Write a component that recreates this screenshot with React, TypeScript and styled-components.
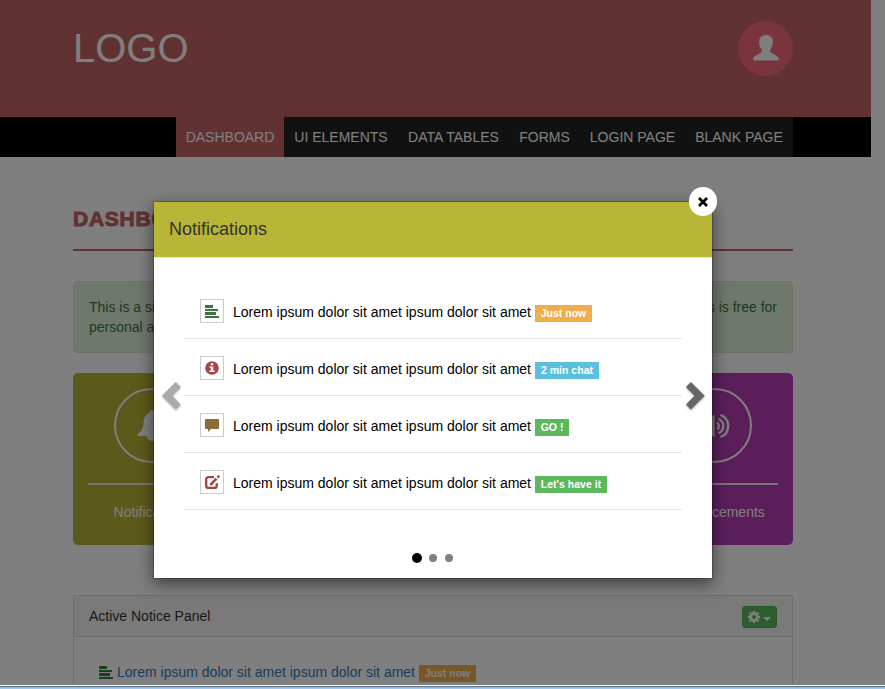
import React from 'react';
import styled, { createGlobalStyle } from 'styled-components';

const Global = createGlobalStyle`
  *, *::before, *::after { box-sizing: border-box; }
  body { margin: 0; background: #fff; font: 14px/20px "Liberation Sans", Arial, sans-serif; color: #333; }
  svg { display: block; }
`;

const Screen = styled.div`
  position: relative;
  width: 885px;
  height: 689px;
  overflow: hidden;
  display: flex;
  flex-direction: column;
`;
const Page = styled.div`
  width: 871px;
  height: 685px;
  overflow: hidden;
`;
const WindowEdge = styled.div`
  position: relative;
  z-index: 3;
  height: 4px;
  border-top: 1px solid #fff;
  background: linear-gradient(#60758c 0 1px, #8ab6e6 1px 2px, #9fc8f4 2px 3px);
`;
const Header = styled.header`
  height: 117px;
  background: #c46464;
  padding: 21px 78px 0 73px;
  display: flex;
  justify-content: space-between;
`;
const Logo = styled.div`
  color: #fff;
  font-size: 40px;
  line-height: 54px;
`;
const Avatar = styled.div`
  width: 55px;
  height: 55px;
  border-radius: 50%;
  background: #f5687c;
  display: flex;
  justify-content: center;
  padding-top: 14px;
`;
const NavBar = styled.nav`
  height: 40px;
  background: #000;
  padding-right: 78px;
  display: flex;
  justify-content: flex-end;
`;
const NavItem = styled.a<{ $active?: boolean; $w: number }>`
  width: ${p => p.$w}px;
  line-height: 40px;
  text-align: center;
  white-space: nowrap;
  color: #fff;
  background: ${p => (p.$active ? '#c46464' : '#222')};
`;
const Content = styled.main`
  width: 720px;
  margin-left: 73px;
`;
const Heading = styled.h1`
  margin: 0 0 30px;
  height: 94px;
  padding-top: 50px;
  border-bottom: 2px solid #c46464;
  color: #c46464;
  font-size: 21px;
  font-weight: 900;
  line-height: 24px;
  letter-spacing: 0.75px;
  -webkit-text-stroke: 1px #c46464;
`;
const Alert = styled.div`
  height: 72px;
  margin-bottom: 20px;
  padding: 15px 15px;
  color: #3c763d;
  background: #dff0d8;
  border: 1px solid #d6e9c6;
  border-radius: 4px;
`;
const AlertLine = styled.div`
  display: flex;
  justify-content: space-between;
`;
const Tiles = styled.div`
  display: flex;
  justify-content: space-between;
  margin-bottom: 50px;
`;
const Tile = styled.div<{ $bg: string }>`
  width: 157.5px;
  height: 172px;
  border-radius: 5px;
  padding: 15px;
  background: ${p => p.$bg};
  color: #fff;
  display: flex;
  flex-direction: column;
  align-items: center;
`;
const TileCircle = styled.div`
  width: 75px;
  height: 75px;
  border: 2px solid #fff;
  border-radius: 50%;
  display: grid;
  place-items: center;
`;
const TileLine = styled.div`
  width: 100%;
  height: 2px;
  margin: 20px 0 17px;
  background: #eee;
`;
const Panel = styled.section`
  height: 120px;
  border: 1px solid #ddd;
`;
const PanelHead = styled.div`
  height: 41px;
  padding: 0 15px;
  background: #f5f5f5;
  border-bottom: 1px solid #ddd;
  display: flex;
  align-items: center;
  justify-content: space-between;
`;
const GearButton = styled.button`
  width: 35px;
  height: 22px;
  margin: 2px 0 0;
  padding: 0 5px 0 5px;
  border: 1px solid #4cae4c;
  border-radius: 3px;
  background: #5cb85c;
  display: flex;
  align-items: center;
  justify-content: space-between;
`;
const Caret = styled.svg`
  margin-top: 3px;
`;
const Notice = styled.div`
  display: flex;
  align-items: center;
  gap: 4px;
  padding: 25px 0 0 25px;
  color: #337ab7;
`;
const Badge = styled.span<{ $bg: string; $w: number }>`
  width: ${p => p.$w}px;
  height: 17px;
  margin-top: 2px;
  background: ${p => p.$bg};
  color: #fff;
  font-size: 10.5px;
  font-weight: 700;
  line-height: 17px;
  text-align: center;
  white-space: nowrap;
`;
const Backdrop = styled.div`
  position: absolute;
  inset: 0 0 4px;
  background: rgba(0, 0, 0, 0.5);
`;
const Modal = styled.div`
  position: absolute;
  left: 153px;
  top: 201px;
  width: 560px;
  height: 378px;
  background: #fff;
  background-clip: padding-box;
  border: 1px solid rgba(0, 0, 0, 0.2);
  box-shadow: 0 5px 15px rgba(0, 0, 0, 0.5);
  display: flex;
  flex-direction: column;
`;
const ModalHead = styled.div`
  height: 56px;
  padding-left: 15px;
  background: #b8b537;
  border-bottom: 1px solid #e5e5e5;
  font-size: 18px;
  line-height: 54px;
`;
const Close = styled.button`
  position: absolute;
  right: -5px;
  top: -15px;
  width: 28px;
  height: 29px;
  padding: 0;
  border: 0;
  border-radius: 14px;
  background: #fff;
  display: grid;
  place-items: center;
`;
const Carousel = styled.div`
  flex: 1;
  display: grid;
  grid-template-columns: 30px 498px 30px;
  padding-top: 24px;
`;
const Arrow = styled.button<{ $right?: boolean }>`
  height: 230px;
  margin-top: -1px;
  padding: 0 0 0 ${p => (p.$right ? 4 : 8)}px;
  border: 0;
  background: none;
  color: ${p => (p.$right ? '#666' : '#aaa')};
  display: flex;
  align-items: center;
  svg { filter: drop-shadow(0 1px 1px rgba(0, 0, 0, 0.35)); overflow: visible; }
`;
const Row = styled.div`
  height: 57px;
  padding: 0 0 0 16px;
  border-bottom: 1px solid #e5e5e5;
  color: #000;
  display: flex;
  align-items: center;
  white-space: nowrap;
`;
const IconBox = styled.span`
  width: 24px;
  height: 24px;
  margin: 2px 9px 0 0;
  border: 1px solid #ccc;
  display: grid;
  place-items: center;
`;
const RowText = styled.span`
  width: 302px;
  margin-top: 4px;
`;
const RowBadge = styled(Badge)`
  margin-top: 7px;
`;
const Dots = styled.div`
  height: 40px;
  display: flex;
  align-items: center;
  padding-left: 258px;
  gap: 8px;
`;
const Dot = styled.i<{ $active?: boolean }>`
  width: ${p => (p.$active ? 10 : 8)}px;
  height: ${p => (p.$active ? 10 : 8)}px;
  margin-left: ${p => (p.$active ? 0 : -1)}px;
  border-radius: 50%;
  background: ${p => (p.$active ? '#000' : '#808080')};
  & + & + & { margin-left: 0; }
`;

const UserIcon = () => (
  <svg width="26" height="26" viewBox="0 0 26 26" fill="#fff">
    <path d="M13 0c4.200 0 6.800 2.200 6.800 6.500 0 3.500-.6 6-2.600 8.200v1.600c0 .9.7 1.300 1.600 1.800l5.500 3.100c1.100.7 1.300 1.300 1.300 2.300v2H.4v-2c0-1 .3-1.600 1.300-2.300l5.500-3.100c1-.5 1.600-.9 1.600-1.800v-1.600C6.800 12.500 6.200 10 6.200 6.500 6.200 2.200 8.800 0 13 0z" />
  </svg>
);
const BellIcon = () => (
  <svg width="30" height="32" viewBox="0 0 30 32" fill="#fff">
    <path d="M15 0c1.700 0 2.300 1 2.200 2.700C22 4 23 8 23.400 13c.4 5 1.600 7.500 6 11.300V26H20a5 5 0 0 1-10 0H.6v-1.700c4.400-3.800 5.600-6.300 6-11.300C7 8 8 4 12.800 2.700 12.700 1 13.300 0 15 0z" />
  </svg>
);
const SpeakerIcon = () => (
  <svg width="31" height="26" viewBox="0 0 31 26" fill="none" stroke="#fff" strokeWidth="2.400">
    <path d="M1 8h5l9.500-6.500v23L6 18H1z" fill="#fff" stroke="none" />
    <path d="M18 9.800a3.600 3.600 0 0 1 0 6.400M19.500 5.800a7.800 7.800 0 0 1 0 14.400M21.500 1.800a12 12 0 0 1 0 22.400" />
  </svg>
);
const AlignIcon = () => (
  <svg width="14" height="14" viewBox="0 0 14 14" fill="#3c763d" shapeRendering="crispEdges">
    <path d="M0 1h8v3H0zM0 5h13v2H0zM0 8h11v3H0zM0 12h14v2H0z" />
  </svg>
);
const InfoIcon = () => (
  <svg width="14" height="14" viewBox="0 0 14 14">
    <circle cx="7" cy="7" r="6.800" fill="#a94442" />
    <path d="M5.800 2.300h2.500v2H5.800zM4.500 5.500h3.800v4h1.300V11H4.500V9.500h1.300V7H4.500z" fill="#fff" />
  </svg>
);
const CommentIcon = () => (
  <svg width="14" height="14" viewBox="0 0 14 14" fill="#8a6d3b">
    <path d="M1 1h12q1 0 1 1v8q0 1-1 1H6l-3 3v-3H1q-1 0-1-1V2q0-1 1-1z" />
  </svg>
);
const EditIcon = () => (
  <svg width="15" height="14" viewBox="0 0 15 14" fill="none" stroke="#a94442">
    <path d="M9 2.100H3.500Q1.200 2.100 1.200 4.500v6q0 2.400 2.300 2.400h6q2.300 0 2.300-2.400V8.300" strokeWidth="2.300" />
    <path d="M5.700 9.500 11.500 3.600" strokeWidth="2.500" />
    <path d="m12.500 2.500 1.700-1.700" strokeWidth="2.500" />
    <path d="m4.800 10.500.7-2.500L8 9.800z" fill="#a94442" stroke="none" />
  </svg>
);
const GearIcon = () => (
  <svg width="12" height="12" viewBox="0 0 12 12" fill="none" stroke="#fff">
    <circle cx="6" cy="6" r="3.400" strokeWidth="2.600" />
    <path d="M6 0v2M6 10v2M0 6h2M10 6h2M1.500 1.500l1.600 1.600M8.900 8.900l1.600 1.600M10.500 1.500 8.900 3.100M3.100 8.900l-1.600 1.600" strokeWidth="2.300" />
  </svg>
);
const Chevron = ({ right }: { right?: boolean }) => (
  <svg width="19" height="28" viewBox="0 0 19 28" fill="currentColor">
    <path d={right ? 'M0 4.900 4.900 0 18.700 13.700 4.900 27.400 0 22.500 8.500 13.700z' : 'M18.700 4.900 13.800 0 0 13.700 13.800 27.400 18.700 22.500 10.200 13.700z'} />
  </svg>
);

const nav: [string, number][] = [
  ['DASHBOARD', 108], ['UI ELEMENTS', 114], ['DATA TABLES', 111], ['FORMS', 71], ['LOGIN PAGE', 105], ['BLANK PAGE', 108],
];
const lorem = 'Lorem ipsum dolor sit amet ipsum dolor sit amet';
const rows = [
  { icon: <AlignIcon />, label: 'Just now', bg: '#f0ad4e', w: 57 },
  { icon: <InfoIcon />, label: '2 min chat', bg: '#5bc0de', w: 64 },
  { icon: <CommentIcon />, label: 'GO !', bg: '#5cb85c', w: 34 },
  { icon: <EditIcon />, label: "Let's have it", bg: '#5cb85c', w: 72 },
];

export default function App() {
  return (
    <Screen>
      <Global />
      <Page>
        <Header>
          <Logo>LOGO</Logo>
          <Avatar><UserIcon /></Avatar>
        </Header>
        <NavBar>
          {nav.map(([t, w], i) => <NavItem key={t} $active={i === 0} $w={w}>{t}</NavItem>)}
        </NavBar>
        <Content>
          <Heading>DASHBOARD</Heading>
          <Alert>
            <AlertLine><span>This is a simple</span><span>This is free for</span></AlertLine>
            <div>personal and</div>
          </Alert>
          <Tiles>
            <Tile $bg="#b8b437">
              <TileCircle><BellIcon /></TileCircle>
              <TileLine />
              Notifications
            </Tile>
            <Tile $bg="#b63cb6">
              <TileCircle><SpeakerIcon /></TileCircle>
              <TileLine />
              Announcements
            </Tile>
          </Tiles>
          <Panel>
            <PanelHead>
              Active Notice Panel
              <GearButton aria-label="Settings">
                <GearIcon />
                <Caret width="8" height="4" viewBox="0 0 8 4"><path d="M0 0h8L4 4z" fill="#fff" /></Caret>
              </GearButton>
            </PanelHead>
            <Notice>
              <AlignIcon />
              <span>{lorem}</span>
              <Badge $bg="#f0ad4e" $w={57}>Just now</Badge>
            </Notice>
          </Panel>
        </Content>
      </Page>
      <WindowEdge />
      <Backdrop />
      <Modal>
        <ModalHead>Notifications</ModalHead>
        <Close aria-label="Close">
          <svg width="10" height="10" viewBox="0 0 10 10"><path d="m1 1 8 8M9 1 1 9" stroke="#000" strokeWidth="2.700" /></svg>
        </Close>
        <Carousel>
          <Arrow aria-label="Previous"><Chevron /></Arrow>
          <div>
            {rows.map(r => (
              <Row key={r.label}>
                <IconBox>{r.icon}</IconBox>
                <RowText>{lorem}</RowText>
                <RowBadge $bg={r.bg} $w={r.w}>{r.label}</RowBadge>
              </Row>
            ))}
          </div>
          <Arrow $right aria-label="Next"><Chevron right /></Arrow>
        </Carousel>
        <Dots><Dot $active /><Dot /><Dot /></Dots>
      </Modal>
    </Screen>
  );
}
